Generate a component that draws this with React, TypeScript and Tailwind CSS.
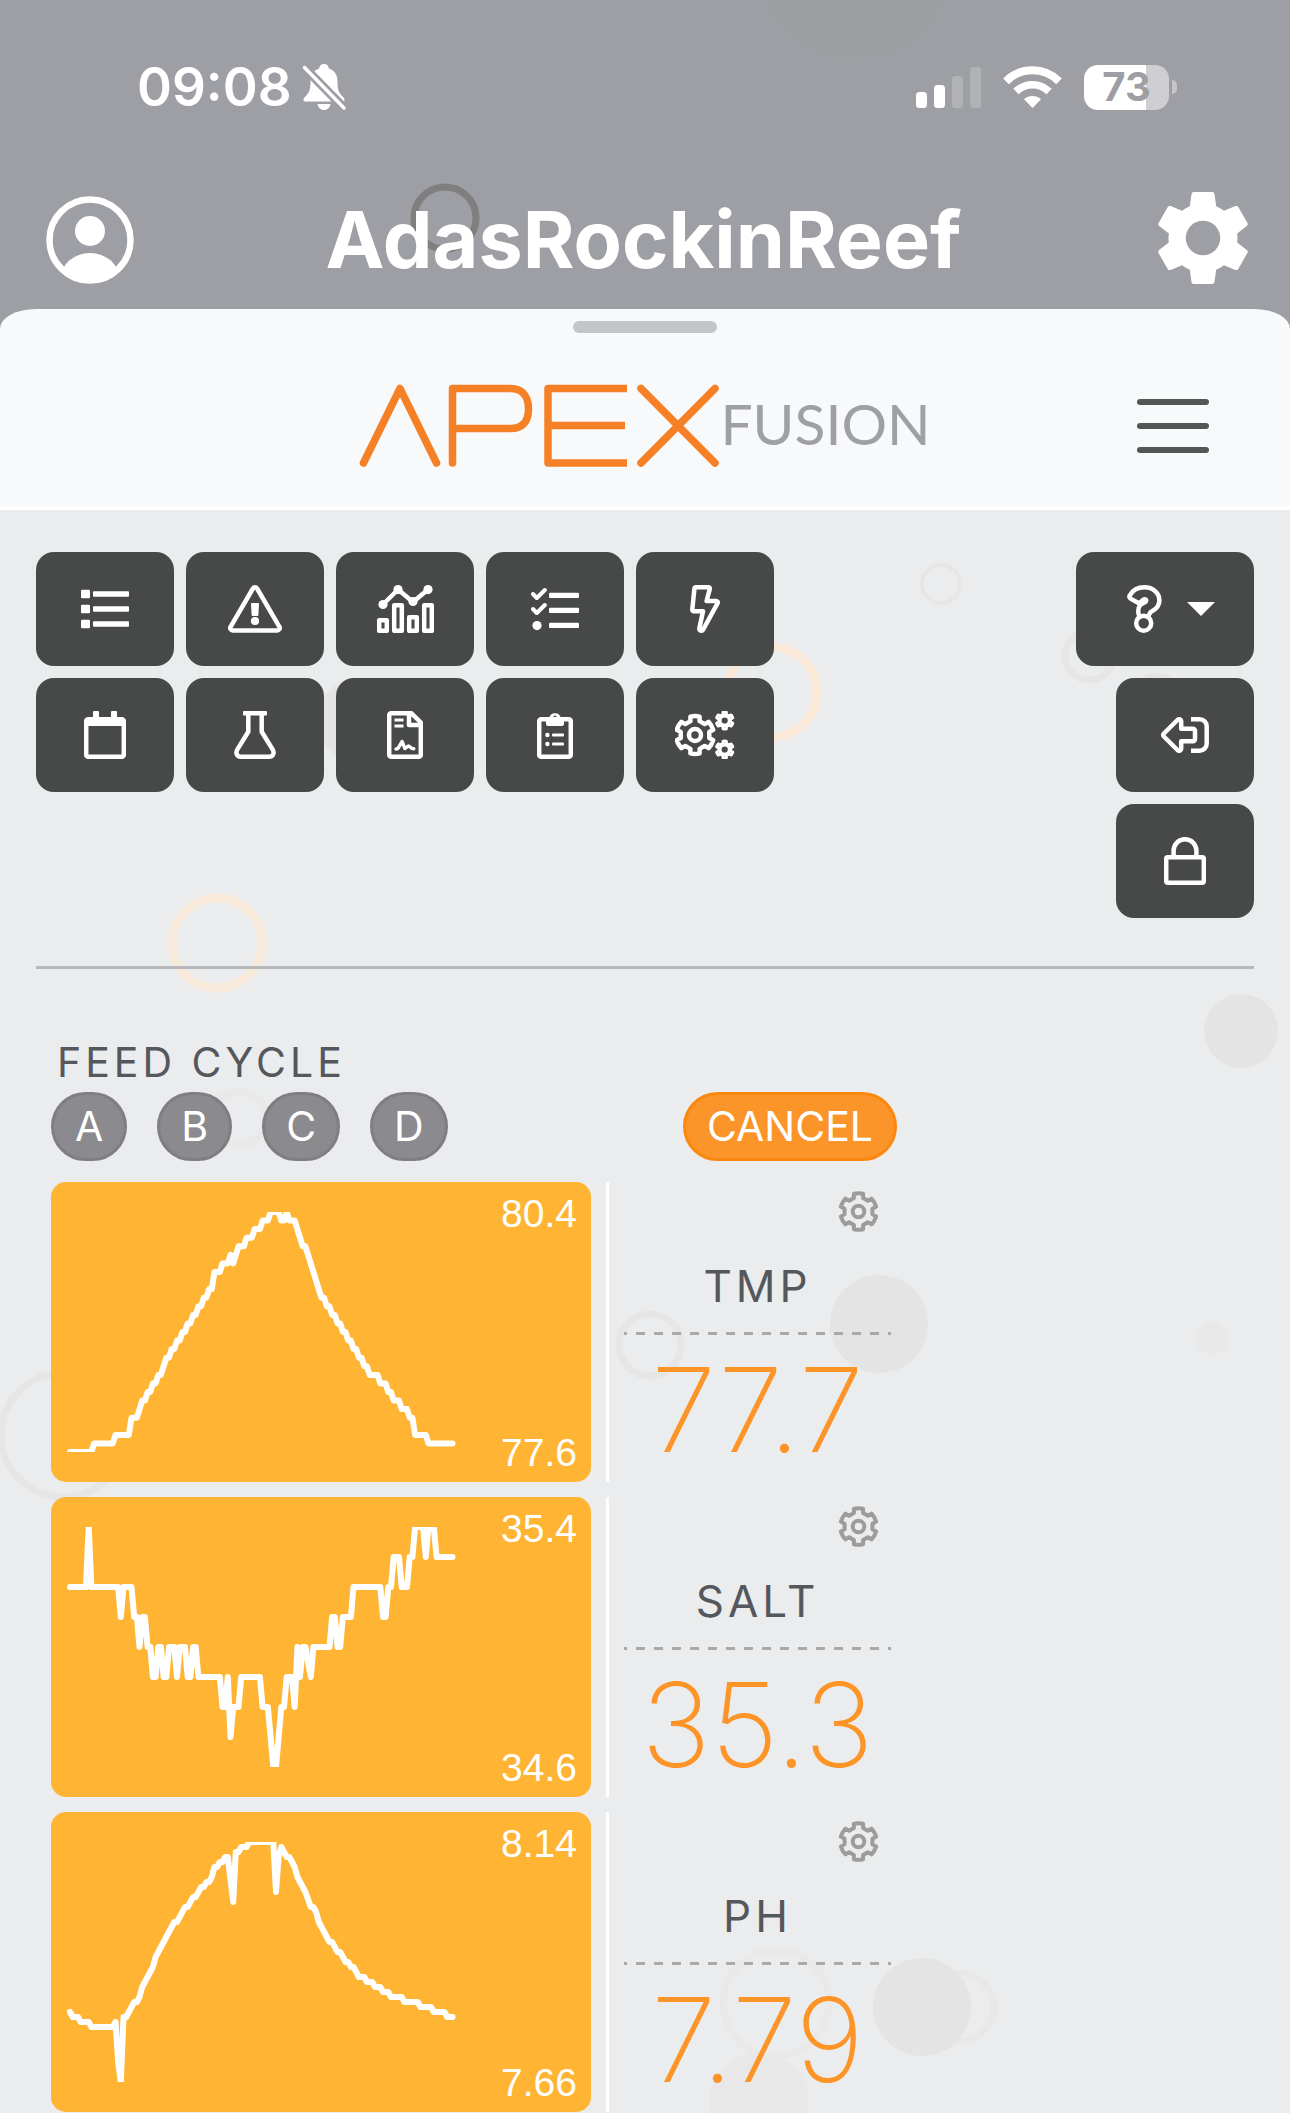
import type { ReactNode } from "react";

type Run = [index: number, level: number];

type Probe = {
  name: string;
  value: string;
  high: string;
  low: string;
  levels: number;
  data: Run[];
};

const probes: Probe[] = [
  {
    name: "TMP",
    value: "77.7",
    high: "80.4",
    low: "77.6",
    levels: 28,
    data: [
      [0, 0], [8, 0], [9, 1], [16, 1], [17, 2], [22, 2], [23, 4], [25, 4], [27, 6], [28, 6], [29, 7], [30, 7],
      [31, 8], [32, 8], [33, 9], [34, 9], [36, 11], [37, 11], [38, 12], [39, 12], [40, 13], [41, 13], [42, 14],
      [43, 14], [44, 15], [45, 15], [46, 16], [47, 16], [48, 17], [49, 17], [50, 18], [51, 18], [52, 19], [53, 19],
      [54, 21], [56, 21], [57, 22], [59, 22], [60, 23], [61, 22], [63, 24], [65, 24], [66, 25], [68, 25], [69, 26],
      [71, 26], [72, 27], [74, 27], [75, 28], [78, 28], [79, 27], [80, 27], [81, 28], [82, 27], [84, 27], [87, 24],
      [88, 24], [94, 18], [95, 18], [96, 17], [97, 17], [98, 16], [99, 16], [100, 15], [101, 15], [102, 14],
      [103, 14], [104, 13], [105, 13], [106, 12], [107, 12], [108, 11], [109, 11], [110, 10], [111, 10], [112, 9],
      [115, 9], [116, 8], [118, 8], [119, 7], [120, 7], [121, 6], [123, 6], [124, 5], [126, 5], [127, 4], [128, 4],
      [129, 2], [133, 2], [134, 1], [143, 1],
    ],
  },
  {
    name: "SALT",
    value: "35.3",
    high: "35.4",
    low: "34.6",
    levels: 8,
    data: [
      [0, 6], [6, 6], [7, 8], [8, 6], [18, 6], [19, 5], [20, 6], [23, 6], [24, 5], [25, 5], [26, 4], [27, 5], [28, 5],
      [29, 4], [30, 4], [31, 3], [32, 3], [33, 4], [34, 4], [35, 3], [36, 3], [37, 4], [39, 4], [40, 3], [41, 4],
      [43, 4], [44, 3], [45, 3], [46, 4], [47, 4], [48, 3], [56, 3], [57, 2], [58, 2], [59, 3], [60, 1], [61, 2],
      [63, 2], [64, 3], [71, 3], [72, 2], [74, 2], [76, 0], [77, 0], [79, 2], [80, 2], [81, 3], [83, 3], [84, 2],
      [85, 4], [86, 3], [87, 4], [88, 4], [90, 3], [91, 4], [97, 4], [98, 5], [99, 5], [100, 4], [101, 4], [102, 5],
      [105, 5], [106, 6], [116, 6], [117, 5], [118, 5], [119, 6], [120, 6], [121, 7], [123, 7], [124, 6], [126, 6],
      [127, 7], [128, 7], [129, 8], [132, 8], [133, 7], [134, 8], [136, 8], [137, 7], [143, 7],
    ],
  },
  {
    name: "PH",
    value: "7.79",
    high: "8.14",
    low: "7.66",
    levels: 48,
    data: [
      [0, 14], [1, 13], [3, 13], [4, 12], [7, 12], [8, 11], [16, 11], [17, 12], [18, 4], [19, 0], [20, 13], [21, 13],
      [24, 16], [25, 16], [26, 17], [27, 19], [31, 23], [32, 25], [39, 32], [40, 32], [43, 35], [44, 35], [46, 37],
      [47, 37], [49, 39], [50, 39], [51, 40], [52, 40], [53, 41], [54, 43], [55, 43], [56, 44], [57, 44], [58, 45],
      [59, 45], [61, 36], [62, 46], [63, 46], [64, 47], [66, 47], [67, 48], [76, 48], [77, 38], [78, 45], [79, 47],
      [81, 45], [82, 45], [84, 43], [85, 41], [88, 38], [90, 35], [91, 35], [92, 34], [93, 32], [97, 28], [98, 28],
      [100, 26], [101, 26], [103, 24], [104, 24], [105, 23], [106, 23], [108, 21], [110, 21], [111, 20], [113, 20],
      [114, 19], [116, 19], [117, 18], [119, 18], [120, 17], [124, 17], [125, 16], [130, 16], [131, 15], [135, 15],
      [136, 14], [140, 14], [141, 13], [143, 13],
    ],
  },
];

/* Six-toothed cog outline: arcs along each tip, short flanks, straight valleys. */
function gearPath(cx: number, cy: number, outer: number, inner: number, halfTip: number, halfRoot: number) {
  const at = (r: number, t: number) => `${(cx + r * Math.cos(t)).toFixed(2)} ${(cy + r * Math.sin(t)).toFixed(2)}`;
  const root = Math.asin(halfRoot / inner);
  const tip = Math.asin(halfTip / outer);
  let d = "";
  for (let k = 0; k < 6; k++) {
    const a = (k * Math.PI) / 3 - Math.PI / 2;
    d += `${k === 0 ? "M" : "L"}${at(inner, a - root)}L${at(outer, a - tip)}`;
    d += `A${outer} ${outer} 0 0 1 ${at(outer, a + tip)}L${at(inner, a + root)}`;
  }
  return `${d}Z`;
}

function Icon({ w, h = 48, children }: { w: number; h?: number; children: ReactNode }) {
  return (
    <svg
      width={w}
      height={h}
      viewBox={`0 0 ${w} ${h}`}
      fill="none"
      stroke="currentColor"
      strokeWidth="4.5"
      strokeLinejoin="round"
      strokeLinecap="round"
      aria-hidden="true"
    >
      {children}
    </svg>
  );
}

const solid = { fill: "currentColor", stroke: "none" };

const ListIcon = () => (
  <Icon w={48}>
    <g {...solid}>
      {[0, 15, 30].map((y) => (
        <g key={y}>
          <rect x="0" y={y + 4.7} width="9" height="8.6" rx="1" />
          <rect x="12" y={y + 6.2} width="36" height="5.6" rx="1" />
        </g>
      ))}
    </g>
  </Icon>
);

const WarningIcon = () => (
  <Icon w={54}>
    <path d="M24.9 3.5 2.7 41.6a2.5 2.5 0 0 0 2.2 3.9h44.2a2.5 2.5 0 0 0 2.2-3.9L29.1 3.5a2.4 2.4 0 0 0-4.2 0z" />
    <path {...solid} d="M23.9 18h6.2c.6 0 1 .5.9 1l-.6 11c0 .5-.4.9-.9.9h-5c-.5 0-.9-.4-.9-.9l-.6-11c0-.5.4-1 .9-1z" />
    <circle {...solid} cx="27" cy="36" r="4.1" />
  </Icon>
);

const TrendIcon = () => (
  <Icon w={57}>
    <path d="M6 19.5 21 4.5 36 17 51 4.5" />
    <g {...solid}>
      <circle cx="6" cy="19.5" r="4.6" />
      <circle cx="21" cy="4.6" r="4.6" />
      <circle cx="36" cy="16.5" r="4.6" />
      <circle cx="51" cy="4.6" r="4.6" />
    </g>
    <rect x="2.2" y="35.2" width="7.6" height="10.6" />
    <rect x="17.2" y="20.2" width="7.6" height="25.6" />
    <rect x="32.2" y="32.2" width="7.6" height="13.6" />
    <rect x="47.2" y="20.2" width="7.6" height="25.6" />
  </Icon>
);

const TasksIcon = () => (
  <Icon w={48}>
    <path strokeWidth="4" d="M2 9l3.8 4 8-8M2 24l3.8 4 8-8" />
    <g {...solid}>
      <circle cx="6" cy="40.6" r="4.6" />
      <rect x="18" y="7.7" width="30" height="5.4" rx="1" />
      <rect x="18" y="22.7" width="30" height="5.4" rx="1" />
      <rect x="18" y="37.7" width="30" height="5.4" rx="1" />
    </g>
  </Icon>
);

const BoltIcon = () => (
  <Icon w={30}>
    <path d="M6 2.3h12.4c1 0 1.6.8 1.4 1.6L16.6 16H26c1.6 0 2.2 1.2 1.6 2.2L13.2 44.5c-1.2 2-4.2 1.2-3.8-1.2l3.6-17.1H3.9c-1 0-1.8-.8-1.6-1.8L4.4 3.8c.1-.9.8-1.5 1.6-1.5z" />
  </Icon>
);

const CalendarIcon = () => (
  <Icon w={42}>
    <rect x="2.2" y="8.2" width="37.6" height="37.6" rx="2" />
    <g {...solid}>
      <rect x="9" y="0" width="6" height="9" rx="1" />
      <rect x="27" y="0" width="6" height="9" rx="1" />
      <rect x="2" y="7" width="38" height="8" />
    </g>
  </Icon>
);

const FlaskIcon = () => (
  <Icon w={42}>
    <path d="M14.3 3v17.7L3.4 38.4c-2.4 4 .1 7.3 3.4 7.3h28.4c3.3 0 5.8-3.3 3.4-7.3L27.7 20.7V3" />
    <rect {...solid} x="9" y="0" width="24" height="4.6" rx="1" />
  </Icon>
);

const ReportIcon = () => (
  <Icon w={36}>
    <path d="M24.5 2.3H4.2a2 2 0 0 0-2 2v39.4a2 2 0 0 0 2 2h27.6a2 2 0 0 0 2-2V11.5z" />
    <path d="M22 3v11h11" />
    <path strokeWidth="3" strokeLinecap="butt" d="M7.5 9h9M7.5 15h9" />
    <path strokeWidth="3.4" d="M9 38c2 0 2.5-.8 3.2-2.6L15 30.5l3 7 3.3-2.5c1.5 0 2.5 3 5.500 2.800" />
  </Icon>
);

const ClipboardIcon = () => (
  <Icon w={36}>
    <rect x="2.2" y="8.2" width="31.6" height="37.6" rx="2" />
    <path
      {...solid}
      fillRule="evenodd"
      d="M9 7h3.2a5.9 5.9 0 0 1 11.6 0H27v6a2 2 0 0 1-2 2H11a2 2 0 0 1-2-2zm9-2.6a1.6 1.6 0 1 0 0 3.2 1.6 1.6 0 0 0 0-3.2z"
    />
    <g {...solid}>
      <circle cx="10.4" cy="24" r="2.2" />
      <circle cx="10.4" cy="33" r="2.2" />
      <rect x="15" y="22.5" width="12" height="3" rx="1" />
      <rect x="15" y="31.5" width="12" height="3" rx="1" />
    </g>
  </Icon>
);

const GearsIcon = () => (
  <Icon w={60}>
    <path d={gearPath(20, 24, 18.9, 14.6, 4.6, 4.6)} />
    <circle cx="20" cy="24" r="6" />
    {[9.5, 38.5].map((y) => (
      <g key={y}>
        <path strokeWidth="3" d={gearPath(49.7, y, 8.5, 6, 1.6, 1.8)} />
        <circle cx="49.7" cy={y} r="4.8" strokeWidth="3.4" />
      </g>
    ))}
  </Icon>
);

const HelpIcon = () => (
  <Icon w={35}>
    <path d="M11.6 29C10 20.5 14.5 19 17.5 17.5c2.4-1.2 2.2-3.5 0-3.3-2.6.2-3.5 4.3-6.5 3.600L4 13.900c-1.600-1-2-2.200-1.200-3.600C5.600 5.400 10.300 2.300 17.500 2.300c8.500 0 14.900 5.700 14.900 13.200 0 6.500-4.600 9.300-7.900 10.900-1.600.8-1.700 2-2.300 3" />
    <circle cx="16.7" cy="38.2" r="7.5" />
  </Icon>
);

const LogoutIcon = () => (
  <Icon w={48} h={36}>
    <path d="M2.9 16.5 16.5 3c1.7-1.6 3.7-.7 3.7 1.2v7.5H32a2 2 0 0 1 2 2v8.6a2 2 0 0 1-2 2H20.200v7.500c0 1.900-2 2.800-3.700 1.200L2.900 19.500a2.200 2.200 0 0 1 0-3z" />
    <path strokeLinecap="butt" d="M30 2.3h8.7a7 7 0 0 1 7 7v17.4a7 7 0 0 1-7 7H30" />
  </Icon>
);

const LockIcon = () => (
  <Icon w={42}>
    <rect x="2.2" y="20.2" width="37.6" height="25.6" rx="1.5" />
    <path d="M9.6 19v-5.4a11.4 11.4 0 0 1 22.8 0V19" />
  </Icon>
);

const tools = [
  { label: "Outlet list", icon: <ListIcon /> },
  { label: "Alarm log", icon: <WarningIcon /> },
  { label: "Graphs", icon: <TrendIcon /> },
  { label: "Tasks", icon: <TasksIcon /> },
  { label: "Power", icon: <BoltIcon /> },
  { label: "Calendar", icon: <CalendarIcon /> },
  { label: "Measurements", icon: <FlaskIcon /> },
  { label: "Reports", icon: <ReportIcon /> },
  { label: "Notes", icon: <ClipboardIcon /> },
  { label: "Settings", icon: <GearsIcon /> },
];

function ToolButton({ label, children }: { label: string; children: ReactNode }) {
  return (
    <button
      type="button"
      aria-label={label}
      className="flex h-[114px] w-[138px] items-center justify-center rounded-[18px] bg-[#474948] text-white"
    >
      {children}
    </button>
  );
}

function StatusBar() {
  return (
    <div className="flex h-[46px] items-center justify-between pl-[137px] pr-[113px]">
      <div className="flex items-center gap-[10px]">
        <span className="text-[53px] font-semibold leading-[46px]">09:08</span>
        <svg width="44" height="46" viewBox="0 0 44 46" role="img" aria-label="Silent mode">
          <path
            fill="#fff"
            d="M22 0c-3 0-4.6 2-4.9 4.6C10.5 6.8 8.5 12 8.5 18c0 8-1.5 11-5.8 15.2C.6 35.3 1.3 37.5 4 37.5h36c2.7 0 3.4-2.2 1.3-4.3C37 29 35.5 26 35.5 18c0-6-2-11.2-8.6-13.4C26.6 2 25 0 22 0zM15.5 40h13c-.6 3.6-3.1 6-6.5 6s-5.9-2.4-6.5-6z"
          />
          <path stroke="#9e9fa4" strokeWidth="9" d="M0 1l44 45" />
          <path stroke="#fff" strokeWidth="3.4" strokeLinecap="round" d="M2.5 3.5l39.5 40.5" />
        </svg>
      </div>
      <div className="flex items-center gap-[22px]">
        <svg width="65" height="42" viewBox="0 0 65 42" role="img" aria-label="Signal strength">
          <g fill="#fff">
            <rect x="0" y="26" width="11" height="16" rx="3.5" />
            <rect x="18" y="19" width="11" height="23" rx="3.5" />
            <rect x="36" y="10" width="11" height="32" rx="3.5" opacity=".2" />
            <rect x="54" y="1" width="11" height="41" rx="3.5" opacity=".2" />
          </g>
        </svg>
        <svg width="59" height="42" viewBox="0 0 59 42" role="img" aria-label="Wi-Fi" fill="none" stroke="#fff">
          <path strokeWidth="8" d="M3 15.3a37.5 37.5 0 0 1 53 0" />
          <path strokeWidth="7.5" d="M13 25.5a23.3 23.3 0 0 1 33 0" />
          <path fill="#fff" stroke="none" d="M29.5 42l-8.5-8.7a12.5 12.5 0 0 1 17 0z" />
        </svg>
        <div className="flex items-center gap-[3px]">
          <span className="flex h-[45px] w-[85px] items-center justify-center rounded-[14px] bg-[linear-gradient(90deg,#fff_73%,#cfcfd2_73%)] text-[40px] font-bold leading-none text-[#9e9fa4]">
            73
          </span>
          <span className="h-[14px] w-[5px] rounded-r-full bg-[#c5c6c9]" />
        </div>
      </div>
    </div>
  );
}

function TitleBar() {
  return (
    <div className="flex items-center justify-between pl-[46px] pr-[41px]">
      <button type="button" aria-label="Account" className="pt-1">
        <svg width="88" height="88" viewBox="0 0 88 88">
          <clipPath id="avatar">
            <circle cx="44" cy="44" r="42" />
          </clipPath>
          <circle cx="44" cy="44" r="40.5" fill="none" stroke="#fff" strokeWidth="6.5" />
          <circle cx="44" cy="35" r="15" fill="#fff" />
          <ellipse cx="44" cy="82" rx="29" ry="25" fill="#fff" clipPath="url(#avatar)" />
        </svg>
      </button>
      <h1 className="pr-1 pt-[2px] text-[79px] font-bold leading-[92px]">AdasRockinReef</h1>
      <button type="button" aria-label="Settings">
        <svg width="92" height="92" viewBox="2.4 2.4 19.2 19.2" fill="#fff">
          <path d="M19.14 12.94c.04-.3.06-.61.06-.94 0-.32-.02-.64-.07-.94l2.03-1.58c.18-.14.23-.41.12-.61l-1.92-3.32c-.12-.22-.37-.29-.59-.22l-2.39.96c-.5-.38-1.03-.7-1.62-.94l-.36-2.54c-.04-.24-.24-.41-.48-.41h-3.84c-.24 0-.43.17-.47.41l-.36 2.54c-.59.24-1.13.57-1.62.94l-2.39-.96c-.22-.08-.47 0-.59.22L2.74 8.87c-.12.21-.08.47.12.61l2.03 1.58c-.05.3-.09.63-.09.94s.02.64.07.94l-2.03 1.58c-.18.14-.23.41-.12.61l1.92 3.32c.12.22.37.29.59.22l2.39-.96c.5.38 1.03.7 1.62.94l.36 2.54c.05.24.24.41.48.41h3.84c.24 0 .44-.17.47-.41l.36-2.54c.59-.24 1.13-.56 1.62-.94l2.39.96c.22.08.47 0 .59-.22l1.92-3.32c.12-.22.07-.47-.12-.61l-2.01-1.58zM12 15.6a3.6 3.6 0 1 1 0-7.2 3.6 3.6 0 0 1 0 7.2z" />
        </svg>
      </button>
    </div>
  );
}

function Brand() {
  return (
    <div className="flex items-start gap-px">
      <svg
        width="360"
        height="83"
        viewBox="0 0 360 83"
        fill="none"
        stroke="#f68026"
        strokeWidth="7.5"
        role="img"
        aria-label="APEX"
      >
        <path strokeLinejoin="round" strokeLinecap="round" d="M4.5 79 41 4.5 77.5 79" />
        <path strokeLinejoin="round" strokeLinecap="round" d="M93.5 79V4.5h58c12 0 18 8 18 20.5s-6 19.5-18 19.5h-58" />
        <path strokeLinejoin="round" d="M268 4.5h-79V79h79M189 41.5h77" />
        <path strokeLinecap="round" d="M282 4.5 356 79M356 4.5 282 79" />
      </svg>
      <span className="pt-[6px] font-['Lato',sans-serif] text-[57px] font-normal leading-[66px] text-[#9fa0a2]">
        FUSION
      </span>
    </div>
  );
}

function Bubbles() {
  return (
    <svg className="pointer-events-none absolute inset-0 -z-10 h-full w-full" aria-hidden="true">
      <g fill="#e4e4e4">
        <circle cx="358" cy="210" r="41" />
        <circle cx="1157" cy="193" r="30" />
        <circle cx="1241" cy="521" r="37" />
        <circle cx="879" cy="814" r="49" />
        <circle cx="1212" cy="829" r="16" fill="#e8e8e8" />
        <circle cx="759" cy="1593" r="50" fill="#e7e8e7" />
      </g>
      <g fill="none" stroke="#e6e6e6" strokeWidth="7">
        <circle cx="772" cy="182" r="45" stroke="#fae9d8" strokeWidth="9" />
        <circle cx="217" cy="433" r="45" stroke="#f7eadb" strokeWidth="9" />
        <circle cx="941" cy="74" r="19" strokeWidth="4" />
        <circle cx="1089" cy="146" r="24" />
        <circle cx="239" cy="608" r="27" stroke="#e8e9e8" />
        <circle cx="650" cy="835" r="31" />
        <circle cx="63" cy="925" r="62" />
        <circle cx="776" cy="1493" r="53" stroke="#e8e9e8" />
        <circle cx="960" cy="1497" r="34" stroke="#e7e8e7" />
      </g>
      <circle cx="922" cy="1497" r="49" fill="#e4e4e4" />
    </svg>
  );
}

function Chart({ probe }: { probe: Probe }) {
  const step = 240 / probe.levels;
  const points = probe.data
    .map(([i, level]) => `${(19 + i * 2.675).toFixed(1)},${(240 - level * step).toFixed(1)}`)
    .join(" ");
  return (
    <div className="flex h-[300px] w-[540px] justify-between rounded-[15px] bg-[#ffb533] pr-[14px] text-white">
      <svg
        className="my-[30px] overflow-hidden"
        width="410"
        height="240"
        viewBox="0 0 410 240"
        role="img"
        aria-label={`${probe.name} history`}
      >
        <polyline
          points={points}
          fill="none"
          stroke="#fff"
          strokeWidth="6"
          strokeLinejoin="round"
          strokeLinecap="round"
        />
      </svg>
      <div className="flex flex-col justify-between pb-[7px] pt-[10px] text-right font-['Liberation_Sans',sans-serif] text-[39px] leading-[44px]">
        <span>{probe.high}</span>
        <span>{probe.low}</span>
      </div>
    </div>
  );
}

function ProbeRow({ probe }: { probe: Probe }) {
  return (
    <article className="flex gap-[15px]">
      <Chart probe={probe} />
      <div className="flex w-[285px] flex-col border-l-[3px] border-white pl-[15px] pt-[9px] text-center">
        <button type="button" aria-label={`${probe.name} settings`} className="mr-3 self-end text-[#9c9c9c]">
          <Icon w={41} h={41}>
            <g strokeWidth="4">
              <path d={gearPath(20.5, 20.5, 18.3, 14.2, 4.6, 4.6)} />
              <circle cx="20.5" cy="20.5" r="5.8" />
            </g>
          </Icon>
        </button>
        <h3 className="mt-[30px] text-[44px] leading-[48px] tracking-[4px] text-[#54575c]">{probe.name}</h3>
        <div className="mt-[22px] h-[3px] bg-[repeating-linear-gradient(90deg,#a9a9a9_0_3px,transparent_3px_12px,#a9a9a9_12px_18px)]" />
        <p className="mt-[15px] text-[117px] font-extralight leading-[120px] text-[#fd9427]">{probe.value}</p>
      </div>
    </article>
  );
}

export default function App() {
  return (
    <div className="overflow-hidden bg-white pr-px font-['Inter',sans-serif]">
      <header className="relative isolate overflow-hidden bg-[#9e9fa4] pt-16 text-white">
        <svg className="pointer-events-none absolute inset-0 -z-10 h-full w-full" aria-hidden="true">
          <circle cx="855" cy="-36" r="95" fill="#9d9ea2" />
          <circle cx="445" cy="218" r="31" fill="none" stroke="#7f7f7f" strokeWidth="7" />
        </svg>
        <StatusBar />
        <div className="pb-6 pt-[81px]">
          <TitleBar />
        </div>
        <div className="border-b-[3px] border-white bg-[#f8f9fb] pb-10 pt-3 [border-radius:36px_36px_0_0/20px_20px_0_0]">
          <div className="mx-auto h-3 w-36 rounded-full bg-[#c4c5c9]" />
          <div className="mt-[51px] grid grid-cols-[1fr_auto_1fr] items-center">
            <span />
            <Brand />
            <button type="button" aria-label="Menu" className="mr-[81px] flex flex-col gap-[18px] justify-self-end">
              <span className="h-[6px] w-[72px] rounded-full bg-[#555756]" />
              <span className="h-[6px] w-[72px] rounded-full bg-[#555756]" />
              <span className="h-[6px] w-[72px] rounded-full bg-[#555756]" />
            </button>
          </div>
        </div>
      </header>

      <main className="relative isolate overflow-hidden bg-[#ebeced] px-9 pb-px pt-[42px]">
        <Bubbles />
        <div className="flex items-start justify-between border-b-[3px] border-[#b7b8b9] pb-12">
          <div className="grid grid-cols-5 gap-3">
            {tools.map((tool) => (
              <ToolButton key={tool.label} label={tool.label}>
                {tool.icon}
              </ToolButton>
            ))}
          </div>
          <div className="flex flex-col items-end gap-3">
            <button
              type="button"
              aria-label="Help"
              aria-haspopup="menu"
              className="flex h-[114px] w-[178px] items-center justify-end gap-[25px] rounded-[18px] bg-[#474948] pr-[39px] text-white"
            >
              <HelpIcon />
              <svg width="28" height="14" viewBox="0 0 28 14" fill="currentColor" aria-hidden="true">
                <path d="M0 0h28L14 14z" />
              </svg>
            </button>
            <ToolButton label="Sign out">
              <LogoutIcon />
            </ToolButton>
            <ToolButton label="Lock">
              <LockIcon />
            </ToolButton>
          </div>
        </div>

        <section className="mt-[69px] w-[870px] pl-[15px]">
          <h2 className="pl-[6px] text-[41px] leading-[48px] tracking-[4px] text-[#54575c]">FEED CYCLE</h2>
          <div className="mt-[6px] flex justify-between pr-[9px] text-[41px] leading-[63px] text-white">
            <div className="flex gap-[30px]">
              {["A", "B", "C", "D"].map((cycle) => (
                <button
                  key={cycle}
                  type="button"
                  className="rounded-full border-[3px] border-[#7f7f82] bg-[#8b8a8f] px-[21px]"
                >
                  {cycle}
                </button>
              ))}
            </div>
            <button type="button" className="rounded-full border-[3px] border-[#fb870f] bg-[#fb9429] px-[21px]">
              CANCEL
            </button>
          </div>
        </section>

        <section className="mt-[21px] flex flex-col gap-[15px] pl-[15px]">
          {probes.map((probe) => (
            <ProbeRow key={probe.name} probe={probe} />
          ))}
        </section>
      </main>
    </div>
  );
}
